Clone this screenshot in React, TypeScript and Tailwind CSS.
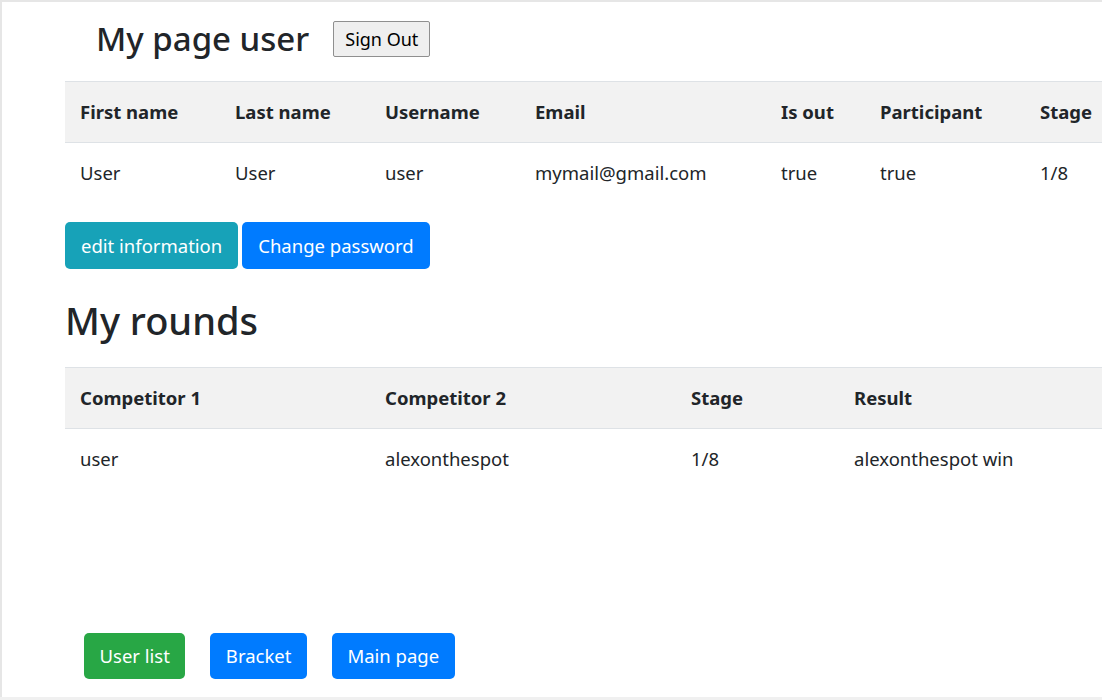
const userCols = [
  { label: "First name", value: "User", w: "w-[155px]" },
  { label: "Last name", value: "User", w: "w-[150px]" },
  { label: "Username", value: "user", w: "w-[150px]" },
  { label: "Email", value: "mymail@gmail.com", w: "w-[246px]" },
  { label: "Is out", value: "true", w: "w-[99px]" },
  { label: "Participant", value: "true", w: "w-[160px]" },
  { label: "Stage", value: "1/8", w: "w-[120px]" },
]

const roundCols = [
  { label: "Competitor 1", value: "user", w: "w-[305px]" },
  { label: "Competitor 2", value: "alexonthespot", w: "w-[306px]" },
  { label: "Stage", value: "1/8", w: "w-[163px]" },
  { label: "Result", value: "alexonthespot win", w: "w-[260px]" },
]

type Col = { label: string; value: string; w: string }

function Table({ cols }: { cols: Col[] }) {
  return (
    <div className="w-[1100px] ml-[63px] text-[18.5px] leading-[30px] text-[#212529]">
      <div className="flex bg-[#f2f2f2] border-t border-[#dee2e6]">
        {cols.map((c) => (
          <div key={c.label} className={`${c.w} shrink-0 px-[15px] py-[15px] font-bold whitespace-nowrap`}>
            {c.label}
          </div>
        ))}
      </div>
      <div className="flex border-t border-[#dee2e6]">
        {cols.map((c) => (
          <div key={c.label} className={`${c.w} shrink-0 px-[15px] py-[15px] whitespace-nowrap`}>
            {c.value}
          </div>
        ))}
      </div>
    </div>
  )
}

export default function App() {
  return (
    <div
      className="w-[1102px] h-[700px] overflow-hidden bg-white flex flex-col"
      style={{ fontFamily: '"Noto Sans", "Open Sans", sans-serif' }}
    >
      <div className="flex-1 border-t-2 border-l-2 border-[#e6e6e6] flex flex-col">
        <div className="flex items-center h-[48px] mt-[13px] ml-[94px]">
          <h1 className="text-[33px] leading-[48px] font-medium text-[#212529]">My page user</h1>
          <button className="ml-[24px] h-[36px] px-[11px] text-[18px] leading-[24px] text-black bg-[#efefef] border border-[#8f8f8f] rounded-[2px]">
            Sign Out
          </button>
        </div>

        <div className="mt-[18px]">
          <Table cols={userCols} />
        </div>

        <div className="flex gap-[4px] ml-[63px] mt-[19px]">
          <button className="h-[47px] px-[16px] text-[18.5px] text-white bg-[#17a2b8] rounded-[5px]">
            edit information
          </button>
          <button className="h-[47px] px-[16px] text-[18.5px] text-white bg-[#007bff] rounded-[5px]">
            Change password
          </button>
        </div>

        <h2 className="ml-[63px] mt-[27px] text-[38px] leading-[48px] font-medium text-[#212529]">My rounds</h2>

        <div className="mt-[23px]">
          <Table cols={roundCols} />
        </div>

        <div className="flex-1" />

        <div className="flex ml-[82px] mb-[18px] gap-[25px]">
          <button className="h-[46px] px-[15.5px] text-[18.5px] text-white bg-[#28a745] rounded-[5px]">User list</button>
          <button className="h-[46px] px-[15.5px] text-[18.5px] text-white bg-[#007bff] rounded-[5px]">Bracket</button>
          <button className="h-[46px] px-[15.5px] text-[18.5px] text-white bg-[#007bff] rounded-[5px]">Main page</button>
        </div>
      </div>
      <div className="h-[3px] bg-[#f0f0f0]" />
    </div>
  )
}
